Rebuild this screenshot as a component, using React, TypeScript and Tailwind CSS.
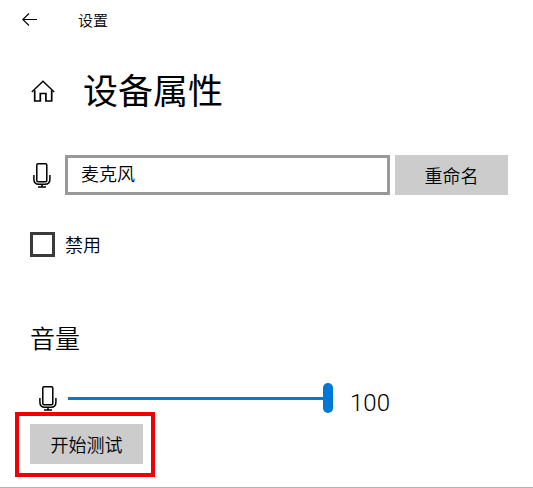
import { useState } from 'react';

function MicIcon() {
  return (
    <svg width="18" height="25" viewBox="0 0 18 25" fill="none" stroke="black" strokeWidth="1.5" className="shrink-0" aria-hidden="true">
      <rect x="3.8" y="0.8" width="10" height="18" rx="1.2" />
      <path d="M0.9 12v4.200c0 3 1.800 5 5 5h6c3.200 0 5-2 5-5V12" />
      <path d="M9 21v3M5 24h8" />
    </svg>
  );
}

function HomeIcon() {
  return (
    <svg width="24" height="22" viewBox="0 0 24 22" fill="none" stroke="black" strokeWidth="1.7" aria-hidden="true">
      <path d="M0.800 12L12 1.200L23.200 12" strokeWidth="1.400" />
      <path d="M3.700 10.200V21H9.300V13.500H14.900V21H20.700V10.200" />
    </svg>
  );
}

export default function App() {
  const [name, setName] = useState('麦克风');
  const [disabled, setDisabled] = useState(false);
  const [volume, setVolume] = useState(100);

  return (
    <div className="min-h-screen flex flex-col bg-white border-b border-[#b4b4b4] text-black text-lg font-[350] font-['Noto_Sans','Noto_Sans_CJK_SC',sans-serif]">
      <header className="flex items-center h-10 pl-[22px] gap-10">
        <button type="button" aria-label="返回">
          <svg width="16" height="14" viewBox="0 0 16 14" fill="none" stroke="black" strokeWidth="1.1" aria-hidden="true">
            <path d="M7 0.500L0.800 6.500L7 12.500M0.800 6.500H15" />
          </svg>
        </button>
        <span className="text-[15px] leading-5">设置</span>
      </header>

      <main className="pl-[30px] pr-[25px]">
        <div className="flex items-center gap-7 mt-6 h-[54px] pl-px">
          <a href="#home" aria-label="主页">
            <HomeIcon />
          </a>
          <h1 className="text-[35px] leading-[50px] font-normal">设备属性</h1>
        </div>

        <div className="flex items-center mt-[37px] h-10">
          <div className="w-[35px] pl-[3px] shrink-0">
            <MicIcon />
          </div>
          <input
            type="text"
            aria-label="设备名称"
            value={name}
            onChange={(e) => setName(e.target.value)}
            className="flex-1 min-w-0 h-10 border-3 border-[#999999] px-[13px] pb-1 outline-none"
          />
          <button type="button" className="w-[113px] h-10 ml-[5px] pt-0.5 shrink-0 bg-[#cccccc]">
            重命名
          </button>
        </div>

        <div className="flex items-center gap-2.5 mt-[37px]">
          <input
            id="disable"
            type="checkbox"
            checked={disabled}
            onChange={(e) => setDisabled(e.target.checked)}
            className="appearance-none size-[25px] border-3 border-[#3a3a3a] checked:bg-[#0078d7]"
          />
          <label htmlFor="disable" className="leading-6">禁用</label>
        </div>

        <h2 className="mt-[63px] text-[25px] leading-9">音量</h2>

        <div className="flex items-center mt-[27px] h-[30px]">
          <div className="w-[38px] pl-[9px] shrink-0">
            <MicIcon />
          </div>
          <input
            type="range"
            aria-label="音量"
            min={0}
            max={100}
            value={volume}
            onChange={(e) => setVolume(Number(e.target.value))}
            className="appearance-none w-full max-w-[265px] h-[30px] bg-transparent [&::-webkit-slider-runnable-track]:h-[3px] [&::-webkit-slider-runnable-track]:bg-[#0078d7] [&::-webkit-slider-thumb]:appearance-none [&::-webkit-slider-thumb]:w-2.5 [&::-webkit-slider-thumb]:h-[30px] [&::-webkit-slider-thumb]:-mt-[14px] [&::-webkit-slider-thumb]:rounded-full [&::-webkit-slider-thumb]:bg-[#0078d7]"
          />
          <output className="ml-[17px] pt-2.5 text-2xl font-[350] font-['Roboto',sans-serif]">{volume}</output>
        </div>

        {/* highlight frame around the test button */}
        <div className="w-fit -ml-[15px] -mt-px border-4 border-[#f00000] pt-2 pb-[9px] pl-[11px] pr-2">
          <button type="button" className="block w-[113px] h-10 pt-0.5 bg-[#cccccc]">
            开始测试
          </button>
        </div>
      </main>
    </div>
  );
}
